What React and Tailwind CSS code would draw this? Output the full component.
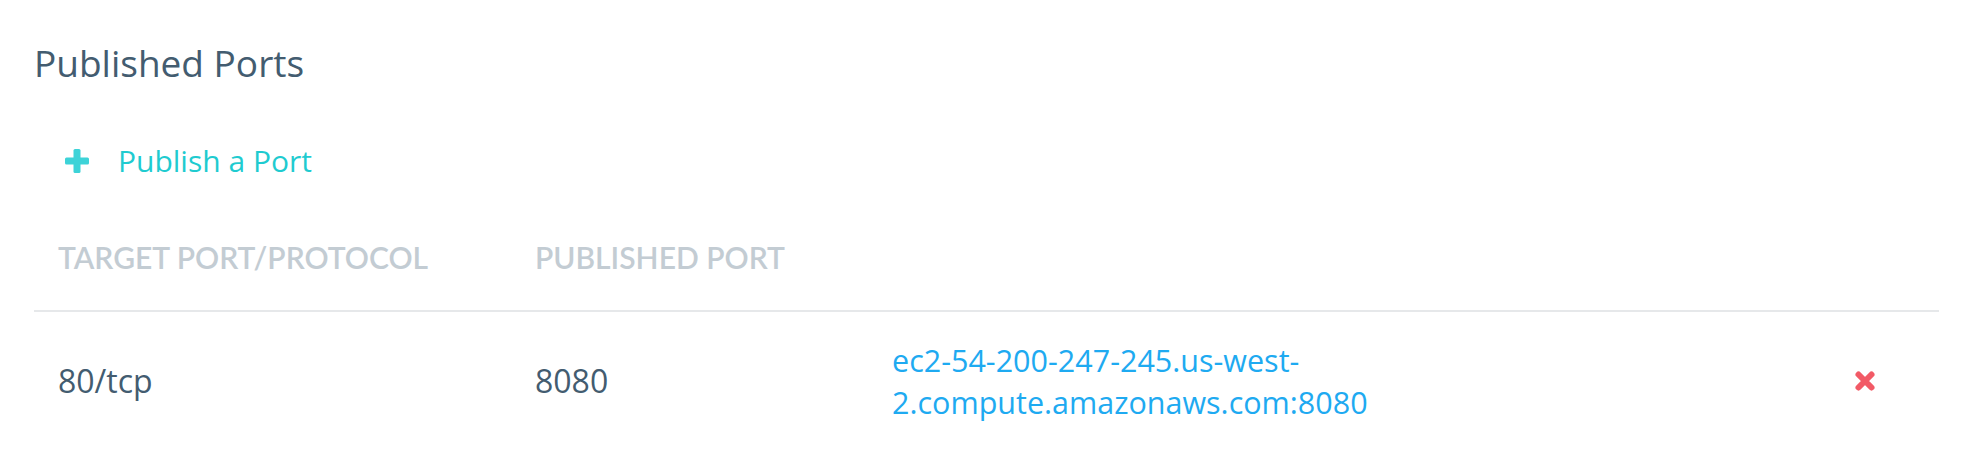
import React from 'react';

const ports = [
    {
        target: '80/tcp',
        published: '8080',
        url: 'ec2-54-200-247-245.us-west-2.compute.amazonaws.com:8080',
    },
];

function PlusIcon() {
    return (
        <svg width="26" height="24" viewBox="0 0 26 24" className="shrink-0">
            <rect x="1" y="8.5" width="24" height="7" rx="1.5" fill="#3dd3d8" />
            <rect x="9.5" y="0" width="7" height="24" rx="1.5" fill="#3dd3d8" />
        </svg>
    );
}

function RemoveIcon() {
    return (
        <svg width="22" height="22" viewBox="0 0 22 22">
            <path d="M4.5 4.5l13 13M17.5 4.5l-13 13" stroke="#f25a66" strokeWidth="6" strokeLinecap="round" />
        </svg>
    );
}

export default function App() {
    return (
        <div className="min-h-[472px] w-full bg-white pl-[34px] pr-[38px] pt-[41px] font-['Open_Sans',sans-serif]">
            <h2 className="text-[37px] leading-[43px] font-normal text-[#435c70]">Published Ports</h2>

            <button className="mt-[59px] ml-[30px] flex items-center gap-[28px] text-[30px] leading-[36px] text-[#1fcbd0]">
                <PlusIcon />
                Publish a Port
            </button>

            {/* TABLE */}
            <div className="mt-[60px]">
                <div className="flex border-b-2 border-[#e6e8ea] pb-[35px] font-['Lato',sans-serif] text-[30px] leading-[36px] font-semibold uppercase text-[#c3ccd3]">
                    <div className="w-[477px] pl-6">Target Port/Protocol</div>
                    <div className="w-[357px] pl-6">Published Port</div>
                </div>

                {ports.map((p) => (
                    <div key={p.url} className="flex items-center py-[27px]">
                        <div className="w-[477px] pl-6 text-[32px] leading-[42px] text-[#435c70]">{p.target}</div>
                        <div className="w-[357px] pl-6 text-[32px] leading-[42px] text-[#435c70]">{p.published}</div>
                        <div className="flex-1 pl-6">
                            <a href="#" className="block w-[560px] text-[30.5px] leading-[42px] text-[#1eaaf1]">
                                {p.url}
                            </a>
                        </div>
                        <div className="flex w-[140px] justify-end pr-[63px]">
                            <RemoveIcon />
                        </div>
                    </div>
                ))}
            </div>
        </div>
    );
}
